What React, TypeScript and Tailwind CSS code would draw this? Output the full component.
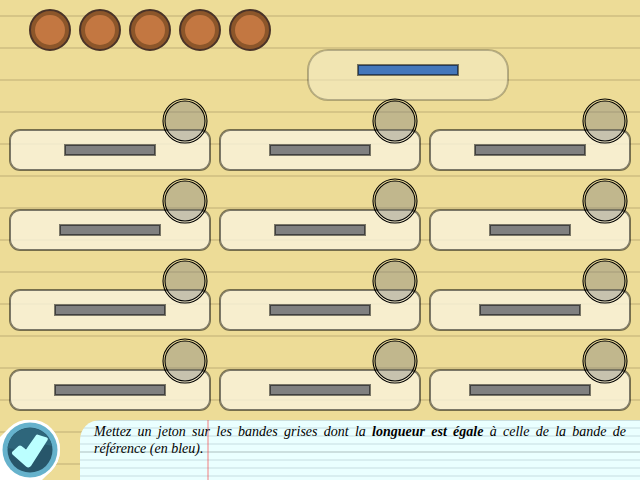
import React from "react";

const BARS: number[] = [90, 100, 110, 100, 90, 80, 110, 100, 100, 110, 100, 120];

function Token({ index }: { index: number }) {
  return (
    <button type="button" aria-label={`Jeton ${index}`} className="block size-[42px] cursor-pointer rounded-full">
      <svg viewBox="0 0 42 42" className="block size-full" aria-hidden="true">
        <circle cx="21" cy="21" r="20" fill="#8c562a" stroke="#4a3328" strokeWidth="2" />
        <circle cx="21" cy="21" r="15" fill="#c37741" />
      </svg>
    </button>
  );
}

function Bar({ length, className }: { length: number; className: string }) {
  return (
    <div
      className={`h-3 border border-black/50 bg-clip-padding inset-ring inset-ring-black/50 ${className}`}
      style={{ width: length + 2 }}
    />
  );
}

function Slot({ index }: { index: number }) {
  return (
    <button
      type="button"
      aria-label={`Emplacement ${index}`}
      className="absolute -top-8 right-0.5 size-[46px] cursor-pointer rounded-full"
    >
      <svg viewBox="0 0 46 46" className="block size-full" aria-hidden="true" fill="none" stroke="#000" strokeWidth="1.1">
        <circle cx="23" cy="23" r="22" />
        <circle cx="23" cy="23" r="20" fill="#808080" fillOpacity="0.4" />
      </svg>
    </button>
  );
}

function CheckButton() {
  return (
    <button type="button" aria-label="Valider" className="block h-[60px] w-20 shrink-0 cursor-pointer">
      <svg viewBox="0 0 80 60" className="block size-full" aria-hidden="true">
        <path d="M0 17 L9 8 A30 30 0 0 1 51 51 L42 60 H0 Z" fill="#fff" />
        <circle cx="30" cy="30" r="30" fill="#fff" />
        <circle cx="30" cy="30" r="27.5" fill="#66b2cc" />
        <circle cx="30" cy="30" r="22.5" fill="#27566a" />
        <path d="M7.6 28 A22.5 22.5 0 0 1 52 26 Q44 23 34 26 Q20 31 7.6 28Z" fill="#2e667b" />
        <path
          d="M12.3 31.800 L18.500 26 Q20 25 21.500 26 L26 29.500 L35.800 15.500 Q36.600 14.300 38 14.700 L46.800 17.600 Q48.600 18.300 47.600 20 L31 46 Q28.700 48.700 26 46.500 L12.500 34.500 Q11.300 33 12.300 31.800Z"
          fill="#bff"
        />
      </svg>
    </button>
  );
}

export default function App() {
  return (
    <div className="flex min-h-screen flex-col bg-[#eddc97] bg-[repeating-linear-gradient(to_bottom,transparent_0_15px,#d6c586_15px_17px,transparent_17px_32px)]">
      <header className="flex items-start gap-9 pl-[29px]">
        <div className="flex gap-2 pt-[9px]">
          {[1, 2, 3, 4, 5].map((n) => (
            <Token key={n} index={n} />
          ))}
        </div>
        <div className="mt-[49px] flex h-[52px] w-[202px] justify-center rounded-[21px] border border-black/25 bg-[#f4ebc4]/60 bg-clip-padding pt-3.5 inset-ring inset-ring-black/25">
          <Bar length={100} className="bg-[#4477bb]" />
        </div>
      </header>

      <main className="px-[9px] pt-7">
        <ul className="grid grid-cols-3 gap-x-2 gap-y-[38px]">
          {BARS.map((length, i) => (
            <li
              key={i}
              className="relative flex h-[42px] items-center justify-center rounded-[11px] border border-black/50 bg-[#f9f3dc]/80 bg-clip-padding inset-ring inset-ring-black/50"
            >
              <Bar length={length} className="bg-[#808080]" />
              <Slot index={i + 1} />
            </li>
          ))}
        </ul>
      </main>

      <footer className="mt-auto flex items-stretch">
        <CheckButton />
        <div className="grow rounded-tl-[20px] bg-[#eaffff] bg-[linear-gradient(to_right,transparent_127px,#ff000040_127px_129px,transparent_129px),repeating-linear-gradient(to_bottom,#cbdfdf_0_1px,transparent_1px_31px,#cbdfdf_31px_32px),repeating-linear-gradient(to_bottom,#d8eef0_0_1px,transparent_1px_7px,#d8eef0_7px_8px)] px-3.5 pt-[3px]">
          <p className="text-justify font-['Liberation_Serif',serif] text-[14px] leading-[17px] text-black italic">
            Mettez un jeton sur les bandes grises dont la <b>longueur est égale</b> à celle de la bande de référence (en
            bleu).
          </p>
        </div>
      </footer>
    </div>
  );
}
